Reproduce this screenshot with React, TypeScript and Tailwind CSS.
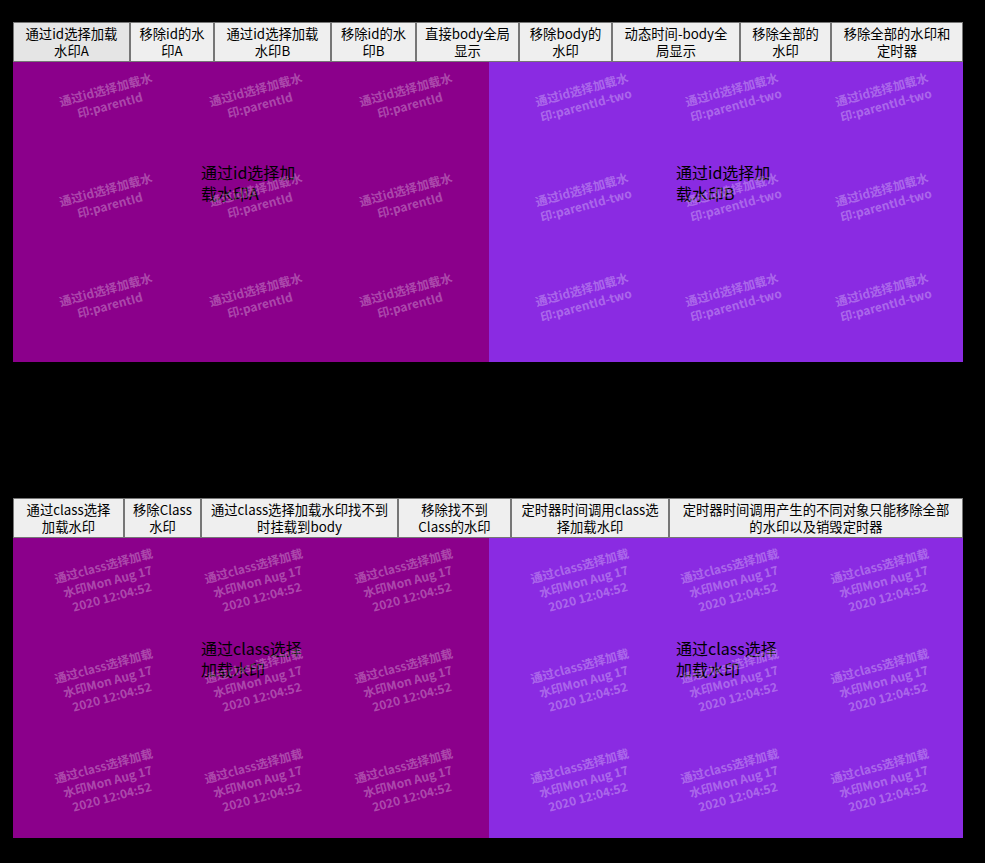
import React from "react";

type Btn = { lines: string[]; cls: string };

const row1: Btn[] = [
  { lines: ["通过id选择加载", "水印A"], cls: "w-[117px] bg-[#e5e5e5]" },
  { lines: ["移除id的水", "印A"], cls: "w-[84px] bg-[#efefef]" },
  { lines: ["通过id选择加载", "水印B"], cls: "w-[117px] bg-[#efefef]" },
  { lines: ["移除id的水", "印B"], cls: "w-[85px] bg-[#efefef]" },
  { lines: ["直接body全局", "显示"], cls: "w-[103px] bg-[#efefef]" },
  { lines: ["移除body的", "水印"], cls: "w-[93px] bg-[#efefef]" },
  { lines: ["动态时间-body全", "局显示"], cls: "w-[128px] bg-[#efefef]" },
  { lines: ["移除全部的", "水印"], cls: "w-[91px] bg-[#efefef]" },
  { lines: ["移除全部的水印和", "定时器"], cls: "w-[132px] bg-[#efefef]" },
];

const row2: Btn[] = [
  { lines: ["通过class选择", "加载水印"], cls: "w-[111px] bg-[#efefef]" },
  { lines: ["移除Class", "水印"], cls: "w-[77px] bg-[#efefef]" },
  { lines: ["通过class选择加载水印找不到", "时挂载到body"], cls: "w-[197px] bg-[#efefef]" },
  { lines: ["移除找不到", "Class的水印"], cls: "w-[113px] bg-[#efefef]" },
  { lines: ["定时器时间调用class选", "择加载水印"], cls: "w-[158px] bg-[#efefef]" },
  { lines: ["定时器时间调用产生的不同对象只能移除全部", "的水印以及销毁定时器"], cls: "w-[294px] bg-[#efefef]" },
];

const font = { fontFamily: '"Noto Sans CJK SC", "Noto Sans", sans-serif' };

function ButtonRow({ items }: { items: Btn[] }) {
  return (
    <div className="flex h-[40px]">
      {items.map((b, i) => (
        <button
          key={i}
          className={`${b.cls} h-[40px] shrink-0 border border-[#767676] text-[13.33px] leading-[17px] text-black text-center whitespace-nowrap flex flex-col items-center justify-center`}
        >
          {b.lines.map((l, j) => (
            <span key={j}>{l}</span>
          ))}
        </button>
      ))}
    </div>
  );
}

function Panel({ cls, text, wm }: { cls: string; text: string[]; wm: string[] }) {
  const cells = Array.from({ length: 9 });
  return (
    <div className={`relative h-[300px] overflow-hidden ${cls}`}>
      <div className="w-[100px] mx-auto pt-[100px] text-[16px] leading-[21px] text-black whitespace-nowrap">
        {text.map((t, i) => (
          <div key={i}>{t}</div>
        ))}
      </div>
      <div className="absolute inset-0 pointer-events-none pl-[20px] pt-[19px] grid grid-cols-[150px_150px_150px] grid-rows-[100px_100px_100px]">
        {cells.map((_, i) => (
          <div key={i} className="flex justify-center items-start">
            <div className="rotate-[-15deg] text-center text-[12px] leading-[16px] font-bold text-white/30 whitespace-nowrap">
              {wm.map((l, j) => (
                <div key={j}>{l}</div>
              ))}
            </div>
          </div>
        ))}
      </div>
    </div>
  );
}

export default function App() {
  const clsWm = ["通过class选择加载", "水印Mon Aug 17", "2020 12:04:52"];
  return (
    <div className="min-h-screen w-full bg-black pl-[13px] pt-[22px]" style={font}>
      <div className="w-[950px]">
        <ButtonRow items={row1} />
        <div className="flex">
          <Panel cls="w-[476px] bg-[#8b008b]" text={["通过id选择加", "载水印A"]} wm={["通过id选择加载水", "印:parentId"]} />
          <Panel cls="w-[474px] bg-[#8a2be2]" text={["通过id选择加", "载水印B"]} wm={["通过id选择加载水", "印:parentId-two"]} />
        </div>
      </div>
      <div className="w-[950px] mt-[136px]">
        <ButtonRow items={row2} />
        <div className="flex">
          <Panel cls="w-[476px] bg-[#8b008b]" text={["通过class选择", "加载水印"]} wm={clsWm} />
          <Panel cls="w-[474px] bg-[#8a2be2]" text={["通过class选择", "加载水印"]} wm={clsWm} />
        </div>
      </div>
    </div>
  );
}
